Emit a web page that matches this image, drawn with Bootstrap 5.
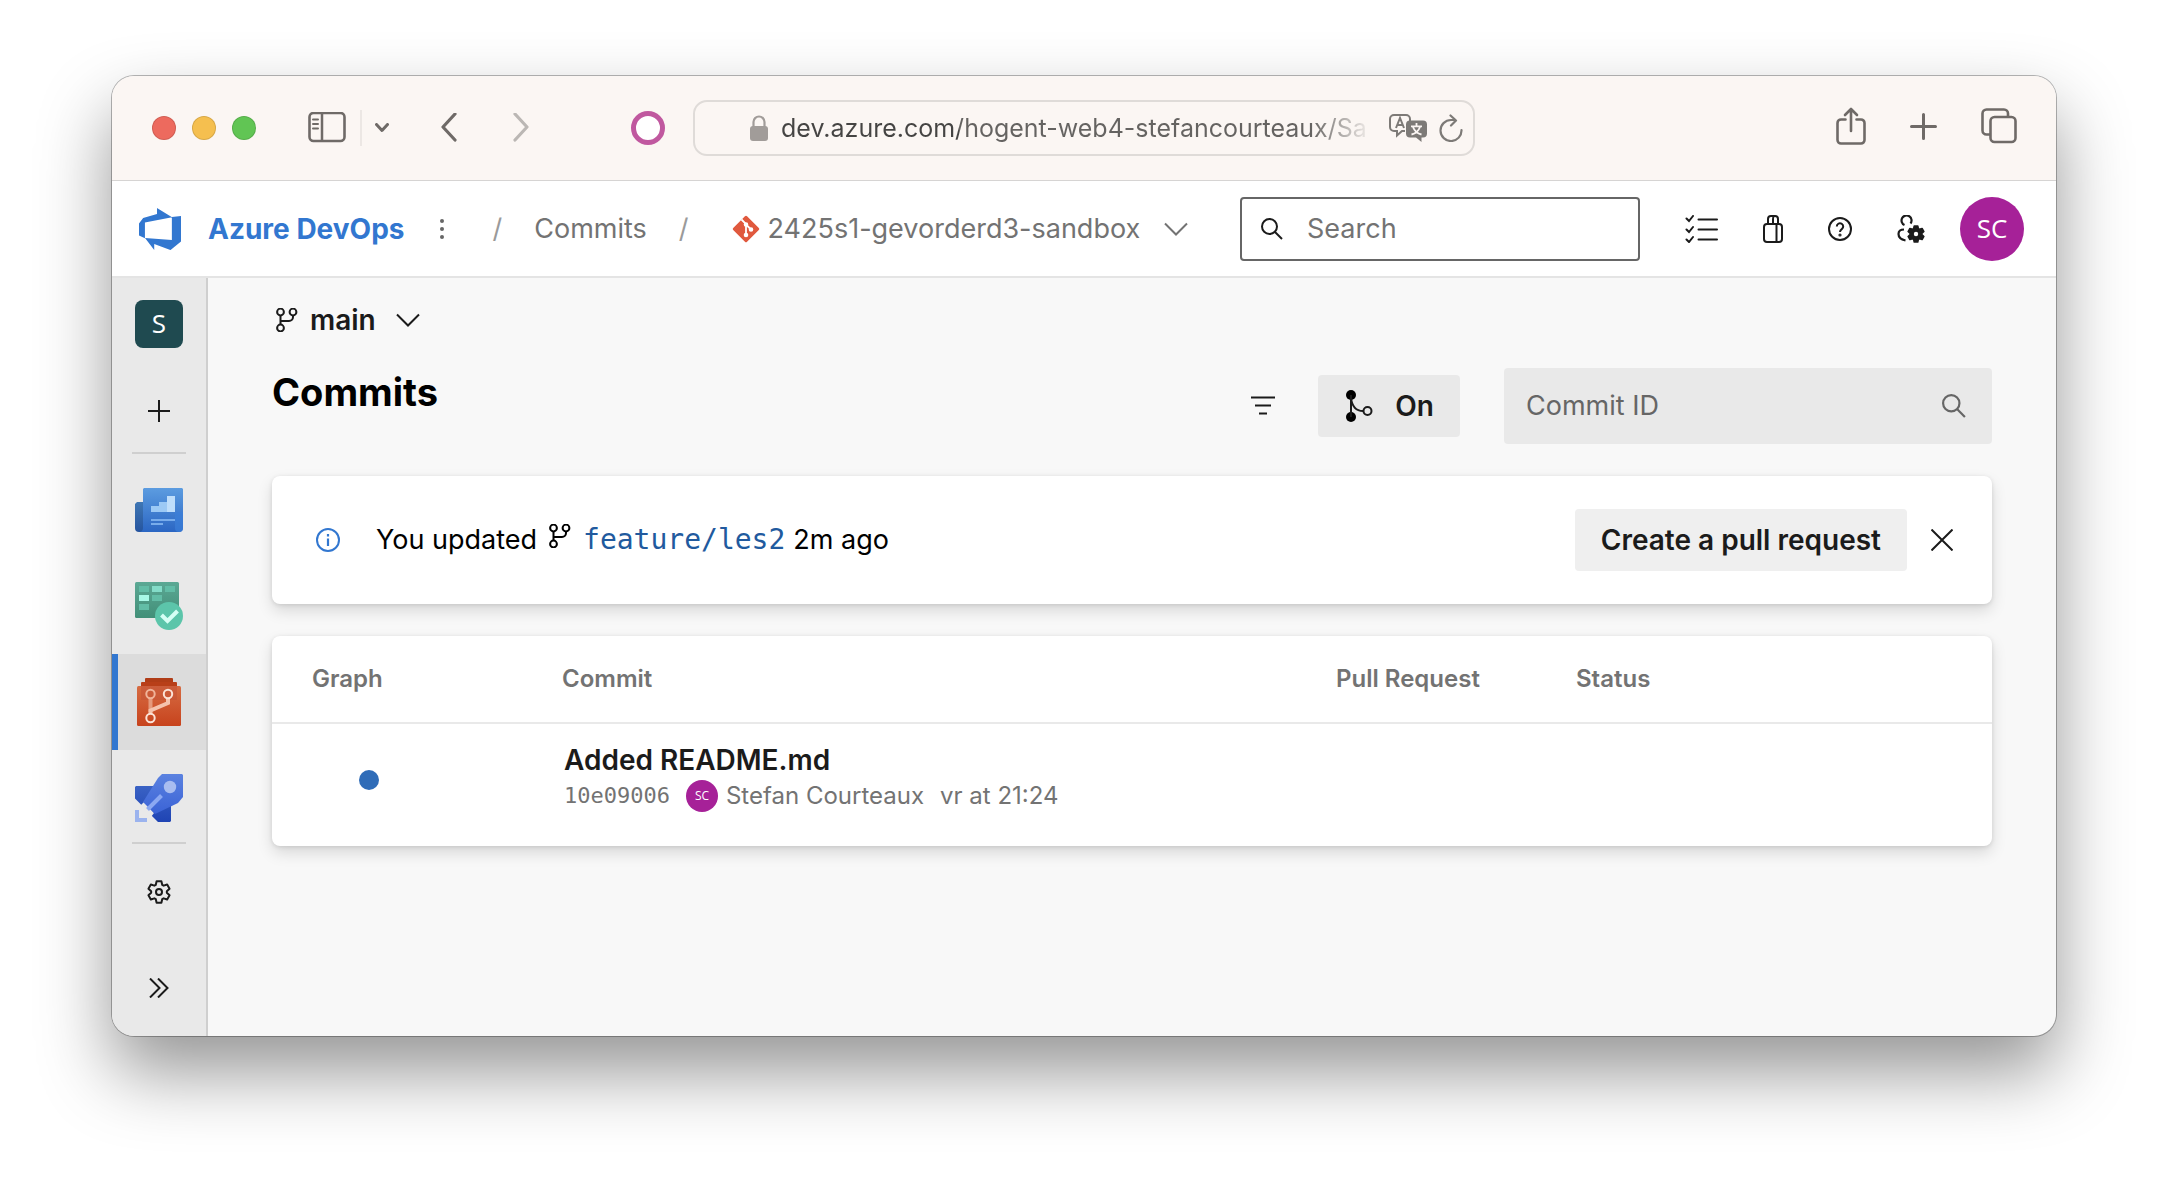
<!DOCTYPE html>
<html lang="en">
<head>
<meta charset="utf-8">
<meta name="viewport" content="width=device-width, initial-scale=1">
<title>Commits - Azure DevOps</title>
<link href="https://cdn.jsdelivr.net/npm/bootstrap@5.3.0/dist/css/bootstrap.min.css" rel="stylesheet">
<style>
  body { font-family: Inter, "Liberation Sans", sans-serif; font-size: 27px; line-height: 36px; color: #000; background: #fff; padding: 76px 112px 148px; }
  svg { display: block; flex: none; }
  .browser { min-height: calc(100vh - 224px); border-radius: 22px; background: #f8f8f8; box-shadow: 0 0 0 1px rgba(0,0,0,.28), 0 36px 72px rgba(0,0,0,.42); }
  .ico { padding: 0; border: 0; color: inherit; font-size: inherit; line-height: 36px; display: inline-flex; align-items: center; justify-content: center; }

  /* window chrome */
  .chrome { height: 105px; background: #fbf6f3; border-bottom: 1px solid #d6d4d3; color: #6f6a67; padding: 0 39px; }
  .side { flex: 1 1 0; }
  .lights { margin-left: 1px; }
  .light { width: 24px; height: 24px; border-radius: 50%; border: 1px solid rgba(0,0,0,.12); padding: 0; }
  .red { background: #ed6a5e; } .amber { background: #f5bf4f; } .green { background: #61c554; }
  .panel-btn { margin-left: 52px; }
  .rule { width: 2px; height: 36px; background: #ece7e4; margin: 0 13px 0 14px; }
  .back { margin-left: 52px; } .fwd { margin-left: 56px; color: #bbb7b4; }
  .ring { width: 34px; height: 34px; border: 5px solid #c0589f; border-radius: 50%; background: #fff; margin: 0 28px 0 auto; }
  .window-tools { gap: 44px; }
  .address { flex: 0 1 782px; height: 56px; border: 2px solid #dfdbd8; border-radius: 14px; padding: 0 10px 0 55px; }
  .address input { border: 0; outline: 0; padding: 0; font-size: 25px; min-width: 0; background: linear-gradient(90deg, #454443 0 178px, #656361 178px 530px, transparent 592px); -webkit-background-clip: text; background-clip: text; -webkit-text-fill-color: transparent; color: #454443; margin: 0 17px 0 13px; }

  /* product header */
  .topnav { height: 97px; background: #fff; border-bottom: 2px solid #e4e4e4; padding: 0 32px 0 27px; color: #1b1b1b; }
  .brand { color: #3277d0; font-size: 28px; font-weight: 700; gap: 27px; text-decoration: none; }
  .more { margin-left: 34px; }
  .crumb { color: #737373; text-decoration: none; }
  .repo { margin-left: 43px; }
  .sep { color: #9a9a9a; }
  .searchbox { width: 400px; height: 64px; border: 2px solid #666; border-radius: 4px; padding: 0 19px; gap: 24px; }
  .searchbox input, .commit-id input { border: 0; outline: 0; padding: 0; background: transparent; min-width: 0; flex: 1; }
  .searchbox input::placeholder { color: #737373; opacity: 1; }
  .tools { margin-left: 45px; gap: 45px; }
  .avatar { background: #a62198; color: #fff; border-radius: 50%; font-family: "Open Sans", "Noto Sans", sans-serif; display: inline-flex; align-items: center; justify-content: center; flex: none; padding: 0; border: 0; }
  .avatar-lg { width: 64px; height: 64px; font-size: 26px; line-height: 32px; padding-bottom: 2px; margin-left: -10px; }
  .avatar-sm { width: 32px; height: 32px; font-size: 12px; }

  /* project rail */
  .rail { width: 96px; background: #e9e9e9; border-right: 2px solid #cfcfcf; color: #1b1b1b; flex: none; }
  .rail a { height: 96px; display: flex; align-items: center; justify-content: center; color: inherit; text-decoration: none; }
  .rail .org { height: 92px; } .rail .plus { height: 82px; }
  .rail hr { width: 54px; margin: 0 auto 8px 20px; border: 0; height: 2px; background: #cfcfcf; opacity: 1; }
  .rail hr.low { margin: -4px auto 0 20px; }
  .rail .current { background: #dcdcdc; border-left: 6px solid #3277d0; padding-right: 6px; }
  .tile { width: 48px; height: 48px; border-radius: 8px; background: #1f4a50; color: #fff; font: 26px/46px "Open Sans", "Noto Sans", sans-serif; text-align: center; }

  /* page */
  .page { padding: 22px 64px 48px; min-width: 0; }
  .branch { font-size: 28px; font-weight: 600; color: #1b1b1b; gap: 12px; padding: 0 4px; }
  .title { font-size: 38px; line-height: 48px; font-weight: 700; margin: 0; }
  .head { margin: 30px 0 32px; height: 76px; }
  .soft { background: #efefef; border: 0; border-radius: 4px; height: 62px; font-size: 28px; font-weight: 600; color: #1b1b1b; padding: 0 26px; line-height: 36px; }
  .toggle { background: #e9e9e9; gap: 22px; padding: 0 26px 0 28px; margin: 0 44px 0 43px; }
  .commit-id { width: 488px; height: 76px; background: #e9e9e9; border-radius: 4px; padding: 0 26px 0 22px; color: #666; }
  .commit-id input::placeholder { color: #666; opacity: 1; }
  .panel { background: #fff; border-radius: 8px; box-shadow: 0 7px 15px rgba(0,0,0,.13), 0 1px 4px rgba(0,0,0,.11); }
  .notice { height: 128px; padding: 0 39px 0 44px; margin-bottom: 32px; }
  .notice p { margin: 0 0 0 36px; }
  .notice p svg { margin: 0 12px 8px 12px; }
  .ref { font-family: "DejaVu Sans Mono", monospace; font-size: 28px; color: #215a9e; text-decoration: none; }
  .log { table-layout: fixed; width: 100%; border-collapse: separate; border-spacing: 0; }
  .log th { font-size: 24px; font-weight: 600; color: #737373; height: 88px; padding: 0 0 0 40px; border-bottom: 2px solid #e9e9e9; }
  .log td { height: 122px; padding: 18px 0 0 42px; vertical-align: top; }
  .c-graph { width: 250px; } .c-pull { width: 240px; } .c-status { width: 456px; }
  .log .node { padding: 46px 0 0 87px; }
  .dot { width: 20px; height: 20px; border-radius: 50%; background: #2f6cb8; display: block; }
  .msg { font-size: 28px; font-weight: 600; color: #1b1b1b; text-decoration: none; display: block; }
  .meta { font-size: 24px; line-height: 36px; color: #737373; }
  .hash { font-family: "DejaVu Sans Mono", monospace; font-size: 22px; color: #737373; text-decoration: none; margin-right: 16px; }
</style>
<script src="https://cdn.jsdelivr.net/npm/bootstrap@5.3.0/dist/js/bootstrap.bundle.min.js"></script>
</head>
<body>
<svg width="0" height="0" class="position-absolute" aria-hidden="true">
  <defs>
    <symbol id="fork" viewBox="0 0 22 24"><g fill="none" stroke="currentColor" stroke-width="2"><circle cx="4.500" cy="4" r="3.400"/><circle cx="17" cy="4" r="3.400"/><circle cx="4.500" cy="20" r="3.400"/><path d="M4.500 7.400v9.200M17 7.400v1.600a4 4 0 0 1-4 4H4.500"/></g></symbol>
    <symbol id="chev" viewBox="0 0 24 14"><path d="M1 1.500l11 11 11-11" fill="none" stroke="currentColor" stroke-width="2"/></symbol>
    <symbol id="lens" viewBox="0 0 22 22"><g fill="none" stroke="currentColor" stroke-width="2"><circle cx="8.500" cy="8.500" r="7.500"/><path d="M14 14l7 7"/></g></symbol>
    <symbol id="gear" viewBox="-12 -12 24 24"><path d="M-2.400-10.800L2.400-10.800 3.200-7.200 4.640-6.370 8.150-7.480 10.550-3.320 7.840-.83 7.840.83 10.550 3.320 8.150 7.480 4.640 6.370 3.200 7.200 2.400 10.800-2.400 10.800-3.200 7.200-4.640 6.370-8.150 7.480-10.550 3.320-7.840.83-7.840-.83-10.550-3.320-8.150-7.480-4.640-6.370-3.200-7.200z" stroke="currentColor" stroke-width="2" stroke-linejoin="round"/></symbol>
    <linearGradient id="gb" x2="0" y2="1"><stop stop-color="#5c9ce0"/><stop offset="1" stop-color="#2b66c3"/></linearGradient>
    <linearGradient id="gd" x2="0" y2="1"><stop stop-color="#3f77b4"/><stop offset="1" stop-color="#25549f"/></linearGradient>
    <linearGradient id="gg" x2="0" y2="1"><stop stop-color="#5ba894"/><stop offset="1" stop-color="#428f78"/></linearGradient>
    <linearGradient id="gr" x2="0" y2="1"><stop stop-color="#d66b42"/><stop offset="1" stop-color="#c7431d"/></linearGradient>
    <linearGradient id="gp" x2="0" y2="1"><stop stop-color="#5b82e0"/><stop offset="1" stop-color="#3b63d6"/></linearGradient>
    <linearGradient id="gq" x2="0" y2="1"><stop stop-color="#3a62c4"/><stop offset="1" stop-color="#1f44b4"/></linearGradient>
  </defs>
</svg>

<div class="browser d-flex flex-column overflow-hidden">
  <div class="chrome d-flex align-items-center">
    <div class="side d-flex align-items-center">
      <div class="lights d-flex gap-3">
        <button class="light red" aria-label="Close window"></button>
        <button class="light amber" aria-label="Minimise window"></button>
        <button class="light green" aria-label="Zoom window"></button>
      </div>
      <button class="btn ico panel-btn" aria-label="Sidebar"><svg width="38" height="32" viewBox="0 0 38 32" fill="none" stroke="currentColor"><rect x="1.500" y="1" width="35" height="28" rx="4" stroke-width="2.600"/><path d="M14 1v28" stroke-width="2.500"/><path d="M5 7.500h5M5 12h5M5 16.500h5" stroke-width="2" stroke-linecap="round"/></svg></button>
      <span class="rule"></span>
      <button class="btn ico" aria-label="Tab groups"><svg width="14" height="10" viewBox="0 0 14 10"><path d="M1.500 1.500L7 7.500l5.500-6" fill="none" stroke="currentColor" stroke-width="3" stroke-linecap="round" stroke-linejoin="round"/></svg></button>
      <button class="btn ico back" aria-label="Back"><svg width="16" height="30" viewBox="0 0 16 30"><path d="M14 1L2 14l12 13" fill="none" stroke="currentColor" stroke-width="3.200" stroke-linecap="round" stroke-linejoin="round"/></svg></button>
      <button class="btn ico fwd" aria-label="Forward"><svg width="16" height="30" viewBox="0 0 16 30"><path d="M2 1l12 13L2 27" fill="none" stroke="currentColor" stroke-width="3.200" stroke-linecap="round" stroke-linejoin="round"/></svg></button>
      <span class="ring"></span>
    </div>
    <div class="address d-flex align-items-center">
      <svg width="18" height="26" viewBox="0 0 18 26"><rect y="11" width="18" height="15" rx="3" fill="#a19c99"/><path d="M3.500 12V7a5.500 5.500 0 0 1 11 0v5" fill="none" stroke="#a19c99" stroke-width="2.200"/></svg>
      <input class="flex-grow-1" type="text" aria-label="Address" value="dev.azure.com/hogent-web4-stefancourteaux/Sa">
      <button class="btn ico" aria-label="Translate"><svg width="38" height="28" viewBox="0 0 38 28"><g fill="none" stroke="#7d7a77" stroke-width="2"><path d="M5 1h12a4 4 0 0 1 4 4v3M16 17h-3l-5 4.500V17H5a4 4 0 0 1-4-4V5a4 4 0 0 1 4-4"/><path d="M7 14l4-10 4 10M8.300 11h5.400"/></g><path d="M21 6.500h13a4 4 0 0 1 4 4v9a4 4 0 0 1-4 4h-1.500V28L27 23.500h-6a4 4 0 0 1-4-4v-9a4 4 0 0 1 4-4z" fill="#7d7a77"/><path d="M27.500 9v3M22 12.300h11M24 13c1.500 4 4 6.500 8.500 7.500M31 13c-1.500 4-4 6.500-8.500 7.500" fill="none" stroke="#fbf6f3" stroke-width="1.800"/></svg></button>
      <button class="btn ico ms-2 ps-1" aria-label="Reload"><svg width="24" height="28" viewBox="0 0 24 28" fill="none" stroke="#7d7a77" stroke-width="2.200" stroke-linecap="round" stroke-linejoin="round"><path d="M22.500 16A10.500 10.500 0 1 1 12 6h4.500M11.500 1.500L17 6.500l-5 5"/></svg></button>
    </div>
    <div class="side window-tools d-flex align-items-center justify-content-end mb-1">
      <button class="btn ico" aria-label="Share"><svg width="30" height="38" viewBox="0 0 30 38" fill="none" stroke="currentColor" stroke-width="2.600" stroke-linecap="round" stroke-linejoin="round"><path d="M9.500 12.500H5A3.500 3.500 0 0 0 1.500 16v17A3.500 3.500 0 0 0 5 36.500h20a3.500 3.500 0 0 0 3.500-3.500V16a3.500 3.500 0 0 0-3.500-3.500h-4.500M15 24V2M9 8l6-6 6 6"/></svg></button>
      <button class="btn ico" aria-label="New tab"><svg width="27" height="27" viewBox="0 0 27 27"><path d="M13.500 1.500v24M1.500 13.500h24" stroke="currentColor" stroke-width="3" stroke-linecap="round"/></svg></button>
      <button class="btn ico" aria-label="Tab overview"><svg width="36" height="36" viewBox="0 0 36 36" fill="none" stroke="currentColor" stroke-width="2.600"><path d="M9 26.500H5.500a4 4 0 0 1-4-4V5.500a4 4 0 0 1 4-4H23a4 4 0 0 1 4 4V9"/><rect x="9.500" y="9" width="25" height="25" rx="4"/></svg></button>
    </div>
  </div>

  <nav class="topnav d-flex align-items-center">
    <a href="#" class="brand d-flex align-items-center"><svg width="42" height="42" viewBox="1 1 16 16"><path fill="#3277d0" d="M17 4v9.740l-4 3.280-6.200-2.260V17l-3.510-4.590 10.230.8V4.440zm-3.410.49L7.850 1v2.290L2.580 4.840 1 6.870v4.610l2.260 1V6.570z"/></svg>Azure DevOps</a>
    <button class="btn ico more" aria-label="More"><svg width="6" height="22" viewBox="0 0 6 22" fill="#666"><circle cx="3" cy="3" r="2"/><circle cx="3" cy="11" r="2"/><circle cx="3" cy="19" r="2"/></svg></button>
    <span class="sep ms-5">/</span>
    <a href="#" class="crumb ms-4 ps-2">Commits</a>
    <span class="sep ms-4 ps-2">/</span>
    <button class="btn ico crumb repo fw-normal"><svg width="28" height="28" viewBox="0 0 28 28"><rect x="4.200" y="4.200" width="19.600" height="19.600" rx="1.500" transform="rotate(45 14 14)" fill="#e0593e"/><g stroke="#fff" stroke-width="1.800" fill="#fff"><path d="M9.500 4.500L14 9v11M14 9.500l5 5" fill="none"/><circle cx="14" cy="9.500" r="1.400"/><circle cx="14" cy="20" r="1.400"/><circle cx="19" cy="14.500" r="1.400"/></g></svg><span class="ms-2">2425s1-gevorderd3-sandbox</span><svg class="ms-4" width="24" height="14"><use href="#chev"/></svg></button>
    <label class="searchbox d-flex align-items-center ms-auto"><svg width="22" height="22" color="#1b1b1b"><use href="#lens"/></svg><input type="search" placeholder="Search" aria-label="Search"></label>
    <div class="tools d-flex align-items-center">
      <button class="btn ico" aria-label="Work items"><svg width="33" height="28" viewBox="0 0 33 28" fill="none" stroke="currentColor" stroke-width="2" stroke-linecap="round"><path d="M13.500 4.500H32M13.500 14.500H32M13.500 24.500H32"/><path d="M1.500 3.500L4 6l4-5M1.500 14.500L4 17l4-5M1.500 24.500L4 27l4-5"/></svg></button>
      <button class="btn ico" aria-label="Marketplace"><svg width="20" height="28" viewBox="0 0 20 28" fill="none" stroke="currentColor" stroke-width="2"><rect x="1" y="9" width="18" height="18" rx="3"/><path d="M13.500 9v18M5 9V4a3 3 0 0 1 3-3h4a3 3 0 0 1 3 3v5M10 9V4a3 3 0 0 1 1.500-3"/></svg></button>
      <button class="btn ico" aria-label="Help"><svg width="24" height="24" viewBox="0 0 24 24" fill="none" stroke="currentColor" stroke-width="2"><circle cx="12" cy="12" r="11"/><path d="M8.800 9.500a3.200 3.200 0 1 1 5 2.600c-1.300.9-1.800 1.500-1.800 3"/><circle cx="12" cy="18" r=".6"/></svg></button>
      <button class="btn ico" aria-label="User settings"><svg width="28" height="28" viewBox="0 0 28 28" color="#1b1b1b" fill="none"><path d="M7.500 10A5 5 0 1 1 13.500 8.500M7 14.500c-3.500 0-5.500 1.500-5.500 4.500 0 3.500 2.500 5.500 7 6.500" stroke="currentColor" stroke-width="2.200"/><svg x="10" y="10" width="18" height="18" fill="#1b1b1b"><use href="#gear"/></svg><circle cx="19" cy="19" r="2.200" fill="#fff"/></svg></button>
      <button class="avatar avatar-lg">SC</button>
    </div>
  </nav>

  <div class="d-flex flex-grow-1">
    <aside class="rail">
      <a href="#" class="org" aria-label="Project"><span class="tile">S</span></a>
      <a href="#" class="plus" aria-label="Add"><svg width="22" height="22" viewBox="0 0 22 22"><path d="M11 0v22M0 11h22" stroke="currentColor" stroke-width="2"/></svg></a>
      <hr>
      <a href="#" aria-label="Overview"><svg width="48" height="44" viewBox="0 0 48 44"><path d="M2 14h10v30H4a4 4 0 0 1-4-4V16z" fill="url(#gd)"/><path d="M9 0h38l1 1v39a4 4 0 0 1-4 4H4c3 0 4-2 4-4V1z" fill="url(#gb)"/><path d="M40 24h8v16a4 4 0 0 1-8 0z" fill="#3c7fd8" opacity=".7"/><path d="M16 18h8v-4h8v10H16z" fill="#9cc9f5"/><path d="M32 8h8v16h-8z" fill="#bfdefb"/><path d="M16 31h24v2H16zM16 35h12v2H16z" fill="#78aceb"/></svg></a>
      <a href="#" aria-label="Boards"><svg width="48" height="48" viewBox="0 0 48 48"><rect width="44" height="36" rx="1.500" fill="url(#gg)"/><path d="M4 4h10v6H4zM30 4h10v6H30zM17 13h10v6H17zM4 22h10v6H4z" fill="#62bda6"/><path d="M17 4h10v6H17z" fill="#83dcc8"/><path d="M4 13h10v6H4z" fill="#a8f8e6"/><circle cx="34" cy="34" r="14" fill="#5cc5aa"/><path d="M26.500 33l6 6 10-10" fill="none" stroke="#d6fff5" stroke-width="4"/></svg></a>
      <a href="#" class="current" aria-label="Repos"><svg width="44" height="48" viewBox="0 0 44 48"><rect x="8" width="28" height="6" rx="1" fill="#b03d18"/><rect x="4" y="4" width="36" height="6" rx="1" fill="#b83f19"/><rect y="8" width="44" height="40" rx="1.500" fill="url(#gr)"/><rect x="4" y="8" width="36" height="14" fill="#c24f35" opacity=".5"/><path d="M13.500 20v14" stroke="#e59a7c" stroke-width="4"/><path d="M31 20v5L13.500 32.500V36" fill="none" stroke="#f5c3ad" stroke-width="4"/><g fill="none" stroke-width="2"><circle cx="13.500" cy="16" r="4.200" stroke="#f0b39a"/><circle cx="31" cy="16" r="4.200" stroke="#fbe3d8"/><circle cx="13.500" cy="40" r="4.200" stroke="#fbe3d8"/></g></svg></a>
      <a href="#" aria-label="Pipelines"><svg width="48" height="48" viewBox="0 0 48 48"><path d="M1 12h35v35l-1 1H23l-7-7-9-9.500-7-7V13z" fill="url(#gq)"/><path d="M5 32l4-4 10 11-3 4z" fill="#e9e9e9"/><path d="M27 0h20l1 1v22L43 29 20 40 8 28 23 4z" fill="url(#gp)"/><circle cx="35" cy="13" r="6.200" fill="#a9bdf0"/><path d="M26.500 21.500l-14 14" stroke="#8ba8f2" stroke-width="4"/><path d="M0 36h4v8h8v4H0z" fill="#9bb3ee"/></svg></a>
      <hr class="low">
      <a href="#" aria-label="Project settings"><svg width="24" height="24" viewBox="0 0 24 24" fill="none"><use href="#gear"/><circle cx="12" cy="12" r="3" stroke="currentColor" stroke-width="2"/></svg></a>
      <a href="#" aria-label="Expand"><svg width="20" height="20" viewBox="0 0 20 20"><path d="M1 .5L10.500 10 1 19.500M9 .5l9.500 9.500L9 19.500" fill="none" stroke="currentColor" stroke-width="2"/></svg></a>
    </aside>

    <main class="page flex-grow-1">
      <button class="btn ico branch"><svg width="22" height="24"><use href="#fork"/></svg><span>main</span><svg class="ms-2" width="24" height="14"><use href="#chev"/></svg></button>
      <div class="head d-flex align-items-start">
        <h1 class="title">Commits</h1>
        <div class="d-flex align-items-center ms-auto h-100">
          <button class="btn ico" aria-label="Filter"><svg width="24" height="20" viewBox="0 0 24 20"><path d="M0 1.500h24M4 9.500h16M8 17.500h8" stroke="#1b1b1b" stroke-width="2"/></svg></button>
          <button class="soft toggle d-flex align-items-center"><svg width="27" height="32" viewBox="0 0 27 32"><circle cx="5" cy="5" r="5"/><circle cx="5" cy="27" r="5"/><g fill="none" stroke="#1b1b1b" stroke-width="2"><path d="M5 5v22M5 8c1 8 5 13 12 13"/><circle cx="21.500" cy="21" r="4"/></g></svg>On</button>
          <label class="commit-id d-flex align-items-center"><input type="text" placeholder="Commit ID" aria-label="Commit ID"><svg width="24" height="24"><use href="#lens"/></svg></label>
        </div>
      </div>

      <section class="panel notice d-flex align-items-center">
        <svg width="24" height="24" viewBox="0 0 24 24"><circle cx="12" cy="12" r="11" fill="none" stroke="#3277d0" stroke-width="2"/><path d="M12 10.500V18M12 6v2.500" stroke="#3277d0" stroke-width="2.200"/></svg>
        <p class="d-flex align-items-center"><span>You updated</span><svg width="22" height="24"><use href="#fork"/></svg><a href="#" class="ref">feature/les2</a><span class="ms-2">2m ago</span></p>
        <button class="soft ms-auto">Create a pull request</button>
        <button class="btn ico ms-4" aria-label="Dismiss"><svg width="22" height="22" viewBox="0 0 22 22"><path d="M.5.5l21 21M21.500.5l-21 21" stroke="#1b1b1b" stroke-width="2"/></svg></button>
      </section>

      <section class="panel">
        <table class="log">
          <thead><tr><th class="c-graph">Graph</th><th>Commit</th><th class="c-pull">Pull Request</th><th class="c-status">Status</th></tr></thead>
          <tbody><tr>
            <td class="node"><span class="dot"></span></td>
            <td><a href="#" class="msg">Added README.md</a>
              <div class="meta d-flex align-items-center"><a href="#" class="hash">10e09006</a><span class="avatar avatar-sm me-2">SC</span><span>Stefan Courteaux</span><span class="ms-3">vr at 21:24</span></div></td>
            <td></td><td></td>
          </tr></tbody>
        </table>
      </section>
    </main>
  </div>
</div>
</body>
</html>
